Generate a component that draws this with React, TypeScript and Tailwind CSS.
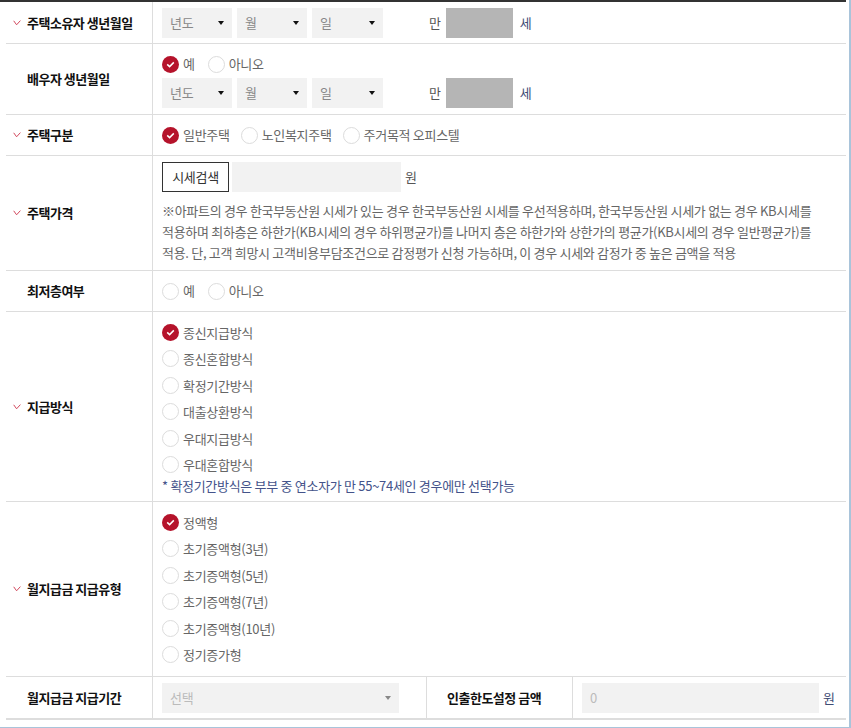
import type { ReactNode } from "react";

const FONT = { fontFamily: '"Noto Sans CJK KR", "Noto Sans", sans-serif' };

function Check() {
  return (
    <svg width="8" height="6" viewBox="0 0 8 6" className="block">
      <path d="M0.7 0.8 L3.6 4.8 L7.4 0.6" stroke="#d2495e" strokeWidth="1" fill="none" />
    </svg>
  );
}

function Label({ text, required = false }: { text: string; required?: boolean }) {
  return (
    <div className="w-[147px] shrink-0 border-r border-[#dddddd] flex items-center pl-[7px]">
      <span className="w-[14px] flex items-center">{required && <Check />}</span>
      <span className="text-[13px] font-bold text-[#111] tracking-[-0.5px]">{text}</span>
    </div>
  );
}

function Arrow({ light = false }: { light?: boolean }) {
  return (
    <svg width="6" height="4" viewBox="0 0 6 4">
      <path d="M0 0 H6 L3 4 Z" fill={light ? "#888" : "#111"} />
    </svg>
  );
}

function Select({ text, w, light = false }: { text: string; w: string; light?: boolean }) {
  return (
    <div className={`${w} h-[30px] bg-[#f2f2f2] flex items-center justify-between pl-[8px] pr-[8px]`}>
      <span className={light ? "text-[#bbbbbb]" : "text-[#888]"}>{text}</span>
      <Arrow light={light} />
    </div>
  );
}

function Radio({ checked = false, label }: { checked?: boolean; label: string }) {
  return (
    <span className="inline-flex items-center gap-[4px]">
      {checked ? (
        <span className="w-[17px] h-[17px] rounded-full bg-[#b5132b] flex items-center justify-center">
          <svg width="9" height="7" viewBox="0 0 9 7">
            <path d="M1.2 3.4 L3.6 5.6 L7.8 1.4" stroke="#fff" strokeWidth="1.5" fill="none" />
          </svg>
        </span>
      ) : (
        <span className="w-[17px] h-[17px] rounded-full border border-[#dcdcdc] bg-white" />
      )}
      <span className="text-[#666]">{label}</span>
    </span>
  );
}

function Row({ h, children, last = false }: { h: string; children: ReactNode; last?: boolean }) {
  return (
    <div className={`flex ${h} ${last ? "border-b-2" : "border-b"} border-[#dddddd]`}>{children}</div>
  );
}

function BirthSelects() {
  return (
    <div className="flex items-center h-[30px]">
      <div className="flex gap-[5px]">
        <Select text="년도" w="w-[70px]" />
        <Select text="월" w="w-[70px]" />
        <Select text="일" w="w-[71px]" />
      </div>
      <span className="ml-[46px] text-[#555]">만</span>
      <div className="ml-[5px] w-[67px] h-[30px] bg-[#b5b5b5]" />
      <span className="ml-[7px] text-[#3f4d75]">세</span>
    </div>
  );
}

export default function App() {
  const pay = ["종신지급방식", "종신혼합방식", "확정기간방식", "대출상환방식", "우대지급방식", "우대혼합방식"];
  const monthly = ["정액형", "초기증액형(3년)", "초기증액형(5년)", "초기증액형(7년)", "초기증액형(10년)", "정기증가형"];

  return (
    <div
      className="w-[851px] h-[728px] bg-white border-r-[2px] border-b border-[#a9c4da] text-[13px] tracking-[-0.3px] overflow-hidden"
      style={FONT}
    >
      <div className="w-[846px] border-t-2 border-[#333]">
        <div className="ml-[6px] w-[840px]">
          <Row h="h-[42px]">
            <Label text="주택소유자 생년월일" required />
            <div className="flex-1 flex items-center pl-[9px]">
              <BirthSelects />
            </div>
          </Row>

          <Row h="h-[71px]">
            <Label text="배우자 생년월일" />
            <div className="flex-1 flex flex-col pl-[9px] pt-[10px]">
              <div className="h-[20px] flex items-center gap-[13px]">
                <Radio checked label="예" />
                <Radio label="아니오" />
              </div>
              <div className="mt-[4px]">
                <BirthSelects />
              </div>
            </div>
          </Row>

          <Row h="h-[41px]">
            <Label text="주택구분" required />
            <div className="flex-1 flex items-center pl-[9px] gap-[11px]">
              <Radio checked label="일반주택" />
              <Radio label="노인복지주택" />
              <Radio label="주거목적 오피스텔" />
            </div>
          </Row>

          <Row h="h-[115px]">
            <Label text="주택가격" required />
            <div className="flex-1 flex flex-col pl-[9px] pt-[6px]">
              <div className="flex items-center h-[30px]">
                <button className="h-[30px] w-[67px] border border-[#333] text-[#333] bg-white">시세검색</button>
                <div className="ml-[3px] w-[169px] h-[30px] bg-[#f2f2f2]" />
                <span className="ml-[4px] text-[#555]">원</span>
              </div>
              <p className="mt-[8px] text-[#666] leading-[21px] whitespace-nowrap">
                ※아파트의 경우 한국부동산원 시세가 있는 경우 한국부동산원 시세를 우선적용하며, 한국부동산원 시세가 없는 경우 KB시세를
                <br />
                적용하며 최하층은 하한가(KB시세의 경우 하위평균가)를 나머지 층은 하한가와 상한가의 평균가(KB시세의 경우 일반평균가)를
                <br />
                적용. 단, 고객 희망시 고객비용부담조건으로 감정평가 신청 가능하며, 이 경우 시세와 감정가 중 높은 금액을 적용
              </p>
            </div>
          </Row>

          <Row h="h-[41px]">
            <Label text="최저층여부" />
            <div className="flex-1 flex items-center pl-[9px] gap-[13px]">
              <Radio label="예" />
              <Radio label="아니오" />
            </div>
          </Row>

          <Row h="h-[190px]">
            <Label text="지급방식" required />
            <div className="flex-1 flex flex-col pl-[9px] pt-[7px]">
              {pay.map((p, i) => (
                <div key={p} className="h-[26.5px] flex items-center">
                  <Radio checked={i === 0} label={p} />
                </div>
              ))}
              <div className="h-[16px] flex items-center text-[#44538a]">
                * 확정기간방식은 부부 중 연소자가 만 55~74세인 경우에만 선택가능
              </div>
            </div>
          </Row>

          <Row h="h-[175px]">
            <Label text="월지급금 지급유형" required />
            <div className="flex-1 flex flex-col pl-[9px] pt-[7px]">
              {monthly.map((p, i) => (
                <div key={p} className="h-[26.5px] flex items-center">
                  <Radio checked={i === 0} label={p} />
                </div>
              ))}
            </div>
          </Row>

          <Row h="h-[43px]" last>
            <Label text="월지급금 지급기간" />
            <div className="w-[274px] shrink-0 border-r border-[#dddddd] flex items-center pl-[9px]">
              <Select text="선택" w="w-[237px]" light />
            </div>
            <div className="w-[146px] shrink-0 border-r border-[#dddddd] flex items-center pl-[20px]">
              <span className="text-[13px] font-bold text-[#111] tracking-[-0.5px]">인출한도설정 금액</span>
            </div>
            <div className="flex-1 flex items-center pl-[9px]">
              <div className="w-[237px] h-[30px] bg-[#f2f2f2] flex items-center pl-[8px] text-[#bbbbbb]">0</div>
              <span className="ml-[4px] text-[#3f4d75]">원</span>
            </div>
          </Row>
        </div>
      </div>
    </div>
  );
}
